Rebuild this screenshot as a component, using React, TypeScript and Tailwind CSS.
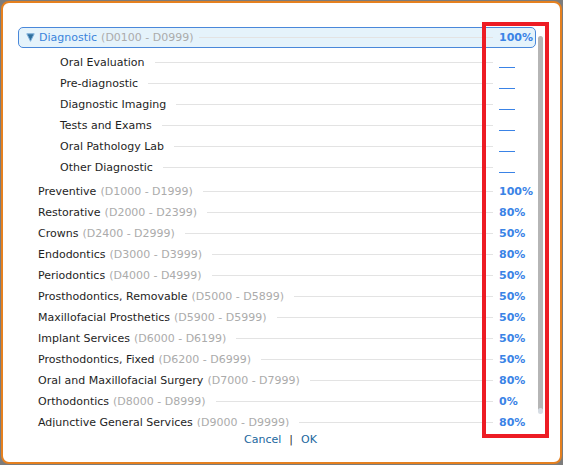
import React from 'react';

type Category = { name: string; code: string; pct: string };

const diagnosticSubs = [
  'Oral Evaluation',
  'Pre-diagnostic',
  'Diagnostic Imaging',
  'Tests and Exams',
  'Oral Pathology Lab',
  'Other Diagnostic',
];

const categories: Category[] = [
  { name: 'Preventive', code: 'D1000 - D1999', pct: '100%' },
  { name: 'Restorative', code: 'D2000 - D2399', pct: '80%' },
  { name: 'Crowns', code: 'D2400 - D2999', pct: '50%' },
  { name: 'Endodontics', code: 'D3000 - D3999', pct: '80%' },
  { name: 'Periodontics', code: 'D4000 - D4999', pct: '50%' },
  { name: 'Prosthodontics, Removable', code: 'D5000 - D5899', pct: '50%' },
  { name: 'Maxillofacial Prosthetics', code: 'D5900 - D5999', pct: '50%' },
  { name: 'Implant Services', code: 'D6000 - D6199', pct: '50%' },
  { name: 'Prosthodontics, Fixed', code: 'D6200 - D6999', pct: '50%' },
  { name: 'Oral and Maxillofacial Surgery', code: 'D7000 - D7999', pct: '80%' },
  { name: 'Orthodontics', code: 'D8000 - D8999', pct: '0%' },
  { name: 'Adjunctive General Services', code: 'D9000 - D9999', pct: '80%' },
];

const Leader = ({ gap = 'ml-[10px]' }: { gap?: string }) => (
  <div className={`${gap} mr-[6px] h-px flex-1 bg-[#e3e3e3]`} />
);

const Percent = ({ value }: { value: string }) => (
  <div className="w-[37px] shrink-0 font-bold text-[#3a83e6]">{value}</div>
);

const Dash = () => (
  <div className="w-[37px] shrink-0">
    <div className="h-px w-[16px] translate-y-[5px] bg-[#3a83e6]" />
  </div>
);

const CategoryRow = ({ item }: { item: Category }) => (
  <div className="flex h-[21px] items-center pl-[20px]">
    <span className="whitespace-nowrap text-[#1e1e1e]">{item.name}</span>
    <span className="ml-[4px] whitespace-nowrap text-[#ababab]">({item.code})</span>
    <Leader />
    <Percent value={item.pct} />
  </div>
);

export default function App() {
  return (
    <div className="h-[465px] w-[563px] bg-[#7c7c7c] p-[1px] font-['DejaVu_Sans',Verdana,sans-serif] text-[11px] leading-[21px]">
      <div className="relative flex h-full w-full flex-col rounded-[8px] border-2 border-[#e5801f] bg-white pl-[15px] pr-[17px] pt-[22px]">
        <div className="flex h-[402px] overflow-hidden">
          <div className="w-[518px] shrink-0 pt-[2px]">
            {/* expanded group */}
            <div className="flex h-[21px] items-center rounded-[5px] border border-[#4a88da] bg-[#e5f3fb] pl-[7px]">
              <svg width="9" height="9" viewBox="0 0 9 9" className="shrink-0">
                <polygon points="0.8,0.8 8.2,0.8 4.5,8.3" fill="#2f6f9c" stroke="#7fb0dc" strokeWidth="1" />
              </svg>
              <span className="ml-[4px] whitespace-nowrap text-[#3a84dc]">Diagnostic</span>
              <span className="ml-[4px] whitespace-nowrap text-[#ababab]">(D0100 - D0999)</span>
              <Leader gap="ml-[5px]" />
              <div className="w-[36px] shrink-0 font-bold text-[#3a83e6]">100%</div>
            </div>
            <div className="mt-[4px]">
              {diagnosticSubs.map((name) => (
                <div key={name} className="flex h-[21px] items-center pl-[42px]">
                  <span className="whitespace-nowrap text-[#1e1e1e]">{name}</span>
                  <Leader />
                  <Dash />
                </div>
              ))}
            </div>
            <div className="mt-[3px]">
              {categories.map((c) => (
                <CategoryRow key={c.name} item={c} />
              ))}
            </div>
          </div>
          {/* scrollbar */}
          <div className="ml-[2px] w-[5px] shrink-0 pt-[11px]">
            <div className="h-[375px] rounded-full bg-[#b5b5b5]" />
            <div className="-mt-[3px] h-[6px] rounded-full bg-[#d6dde4]" />
          </div>
        </div>
        <div className="mt-[5px] flex h-[16px] items-center justify-center leading-[16px] text-[#21679e]">
          <span>Cancel</span>
          <span className="mx-[8px] text-[#333]">|</span>
          <span>OK</span>
        </div>
        <div className="pointer-events-none absolute left-[479px] top-[19px] h-[416px] w-[67px] border-4 border-[#ed1c24]" />
      </div>
    </div>
  );
}
